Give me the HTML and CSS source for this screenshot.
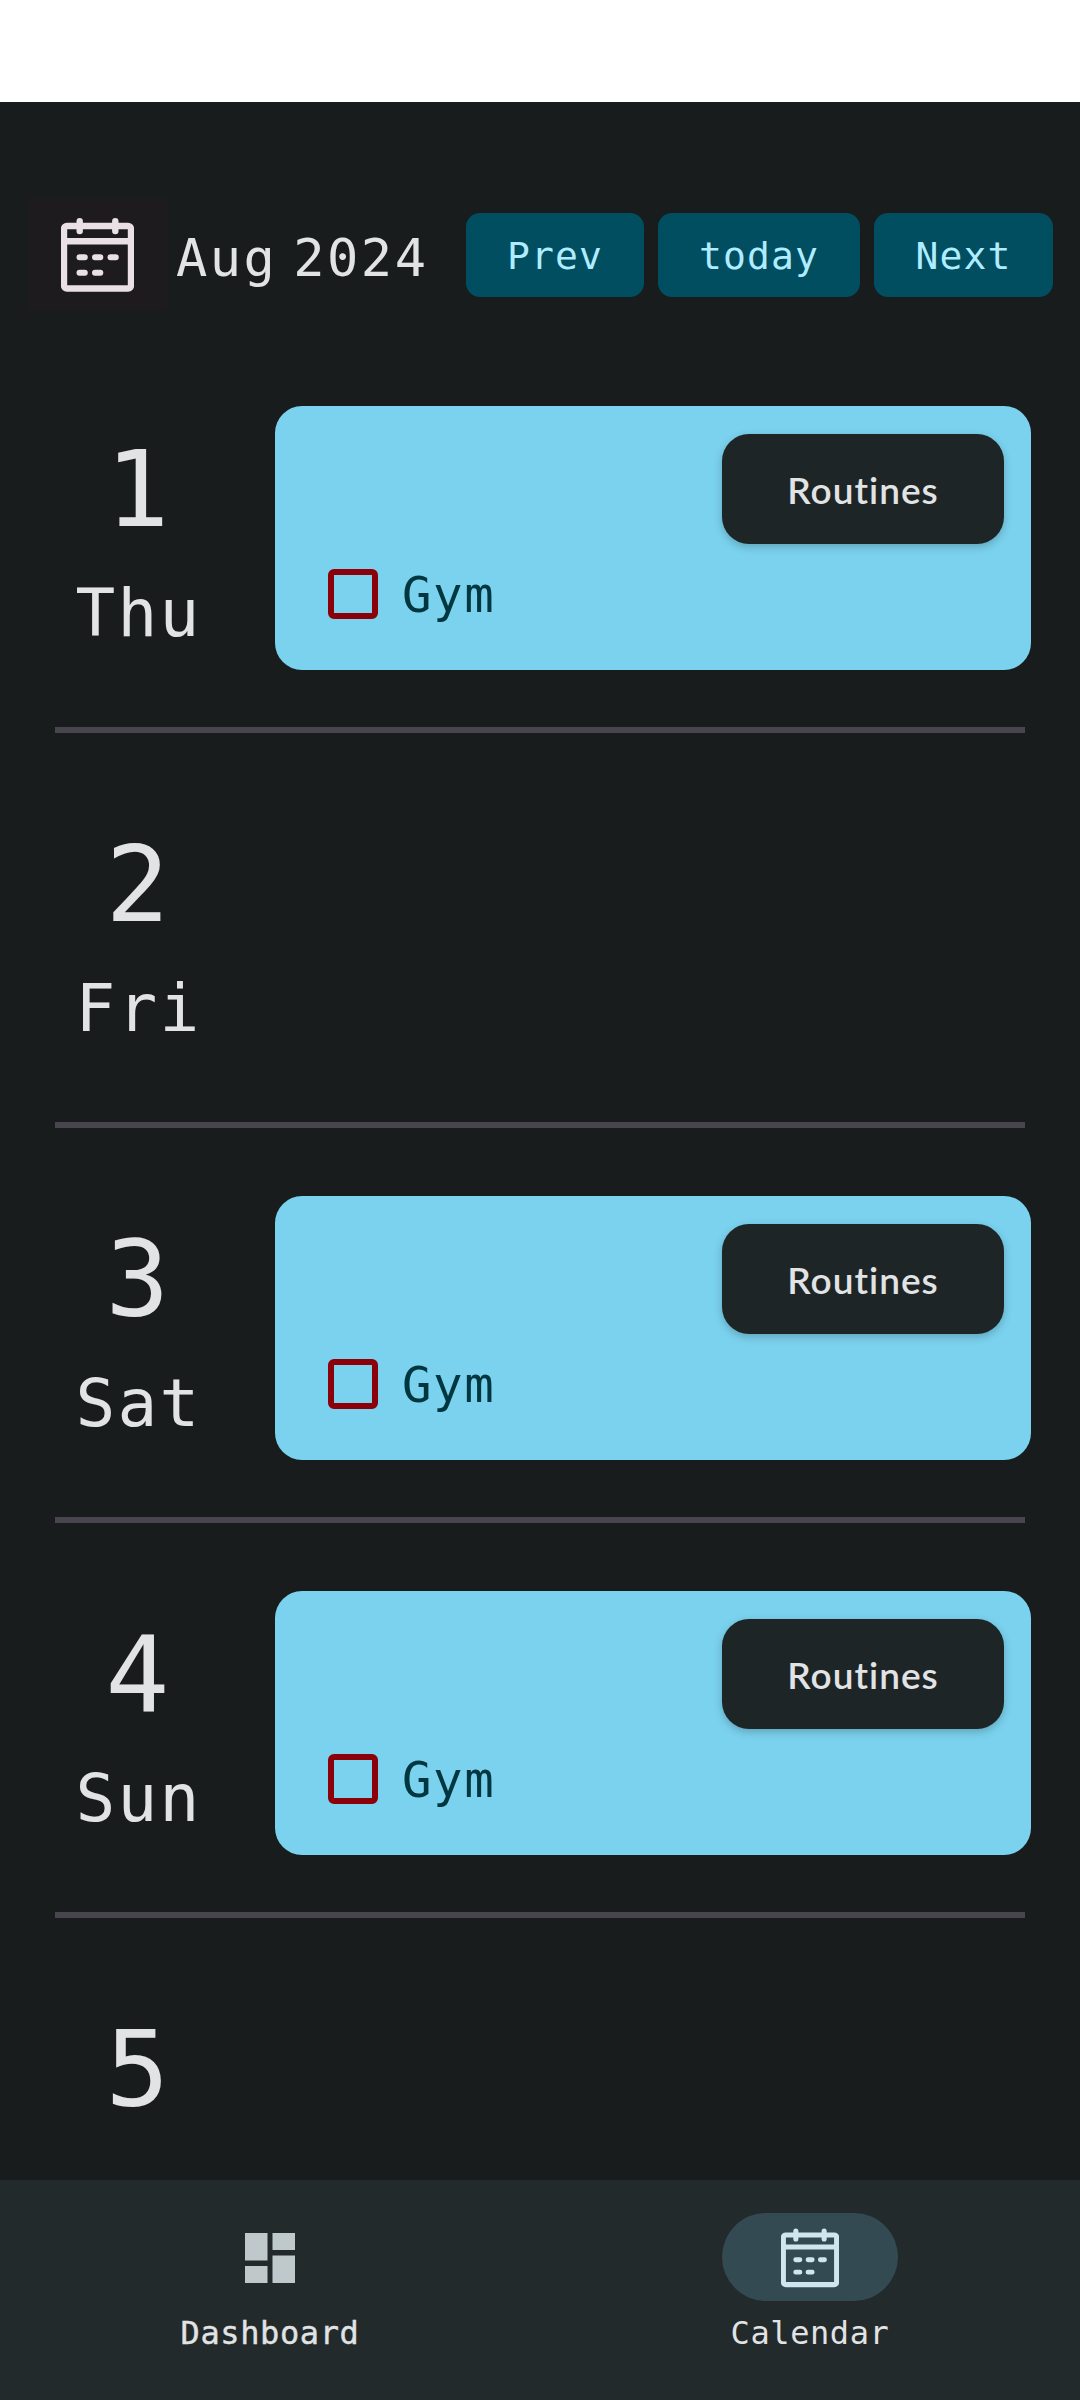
FILE: index.html
```html
<!DOCTYPE html>
<html lang="en">
<head>
<meta charset="utf-8">
<title>Calendar</title>
<link rel="stylesheet" href="styles.css">
</head>
<body>
<svg class="defs" width="0" height="0" aria-hidden="true">
  <symbol id="calendar" viewBox="0 0 73 74">
    <g fill="none" stroke="currentColor" stroke-width="6.4">
      <rect x="3" y="8" width="67" height="62.5" rx="3"/>
      <path d="M3 23.2H70"/>
      <path stroke-linecap="round" d="M18.7 3.2V13M54.3 3.2V13"/>
      <path stroke-linecap="round" stroke-width="6" d="M18.5 39.2H23.8M34 39.2H39.3M49.5 39.2H54.8M18.5 54.8H23.8M34 54.8H39.3"/>
    </g>
  </symbol>
</svg>
<div class="status-bar"></div>
<div class="app">
  <header class="header">
    <div class="header-icon"><svg width="73" height="74"><use href="#calendar"/></svg></div>
    <h1 class="month">Aug 2024</h1>
    <div class="controls">
      <button class="control">Prev</button>
      <button class="control control-wide">today</button>
      <button class="control">Next</button>
    </div>
  </header>
  <main class="days">
    <section class="day">
      <div class="date"><div class="number">1</div><div class="weekday">Thu</div></div>
      <div class="card"><button class="tag">Routines</button><div class="task"><span class="box"></span><span class="task-name">Gym</span></div></div>
    </section>
    <section class="day">
      <div class="date"><div class="number">2</div><div class="weekday">Fri</div></div>
    </section>
    <section class="day">
      <div class="date"><div class="number">3</div><div class="weekday">Sat</div></div>
      <div class="card"><button class="tag">Routines</button><div class="task"><span class="box"></span><span class="task-name">Gym</span></div></div>
    </section>
    <section class="day">
      <div class="date"><div class="number">4</div><div class="weekday">Sun</div></div>
      <div class="card"><button class="tag">Routines</button><div class="task"><span class="box"></span><span class="task-name">Gym</span></div></div>
    </section>
    <section class="day">
      <div class="date"><div class="number">5</div></div>
    </section>
  </main>
  <nav class="nav">
    <div class="nav-item">
      <div class="pill"><svg width="50" height="50" viewBox="0 0 50 50" fill="currentColor"><path d="M0 0H22.5V27.5H0ZM0 33H22.5V50H0ZM27.5 0H50V17H27.5ZM27.5 22.5H50V50H27.5Z"/></svg></div>
      <div class="nav-label nav-label-medium">Dashboard</div>
    </div>
    <div class="nav-item">
      <div class="pill pill-active"><svg width="58" height="60"><use href="#calendar"/></svg></div>
      <div class="nav-label">Calendar</div>
    </div>
  </nav>
</div>
</body>
</html>
```
FILE: styles.css
```css
* { box-sizing: border-box; }
body {
  margin: 0;
  height: 2400px;
  overflow: hidden;
  background: #191c1d;
  color: #e1e3e4;
  font-family: "DejaVu Sans Mono", monospace;
}
svg { display: block; }
.defs { position: absolute; }
button { border: 0; padding: 0; font: inherit; color: inherit; }
.status-bar { height: 102px; background: #fff; }
.app { height: 2298px; display: flex; flex-direction: column; }

.header {
  flex: none;
  height: 236px;
  display: flex;
  align-items: flex-start;
  padding: 96px 26px 0 28px;
}
.header-icon {
  width: 139px;
  height: 112px;
  padding: 20px 33px;
  background: #1d1b1e;
  color: #e9e0e5;
}
.month {
  margin: 27px 0 0 9px;
  width: 290px;
  font-size: 52px;
  font-weight: 400;
  line-height: 66px;
  letter-spacing: 2.5px;
  word-spacing: -18px;
  white-space: nowrap;
}
.controls { display: flex; gap: 14px; margin-top: 15px; }
.control {
  width: 178px;
  height: 84px;
  border-radius: 14px;
  background: #004e5f;
  color: #afecff;
  font-size: 38px;
  line-height: 82px;
  letter-spacing: 1.1px;
  padding-top: 2px;
}
.control:last-child { width: 179px; }
.control-wide { width: 202px; }

.days { flex: none; height: 1842px; overflow: hidden; }
.day { height: 395px; display: flex; position: relative; }
.day:not(:last-child)::after {
  content: "";
  position: absolute;
  left: 55px;
  right: 55px;
  bottom: 0;
  height: 6px;
  background: #49454f;
}
.date { width: 275px; padding-top: 92px; text-align: center; }
.number { font-size: 106px; line-height: 120px; }
.weekday {
  margin-top: 24px;
  padding-left: 2px;
  font-size: 66px;
  line-height: 80px;
  letter-spacing: 2.2px;
}
.card {
  width: 756px;
  height: 264px;
  margin-top: 68px;
  padding: 28px 27px 0 53px;
  border-radius: 27px;
  background: #7bd2ee;
  display: flex;
  flex-direction: column;
}
.tag {
  align-self: flex-end;
  width: 282px;
  height: 110px;
  border-radius: 27px;
  background: #1e2527;
  font-family: Lato, sans-serif;
  font-size: 37px;
  font-weight: 600;
  letter-spacing: 1px;
  box-shadow: 0 3px 8px rgba(0, 0, 0, .22);
}
.task {
  display: flex;
  align-items: center;
  gap: 24px;
  height: 50px;
  margin-top: 25px;
  color: #003640;
  font-size: 49px;
  letter-spacing: 1.6px;
}
.task-name { padding-top: 3px; }
.box { width: 50px; height: 50px; border: 6px solid #8c0009; border-radius: 6px; }

.nav { flex: none; height: 220px; display: flex; background: #222a2c; }
.nav-item {
  flex: 1;
  display: flex;
  flex-direction: column;
  align-items: center;
  padding-top: 33px;
}
.pill {
  width: 176px;
  height: 88px;
  padding-top: 1px;
  border-radius: 44px;
  display: flex;
  align-items: center;
  justify-content: center;
  color: #bfc8cb;
}
.pill-active { background: #334a52; color: #cfe6f1; }
.nav-label { margin-top: 12px; font-size: 32px; line-height: 40px; letter-spacing: .6px; }
.nav-label-medium { -webkit-text-stroke: .4px currentColor; }
```
